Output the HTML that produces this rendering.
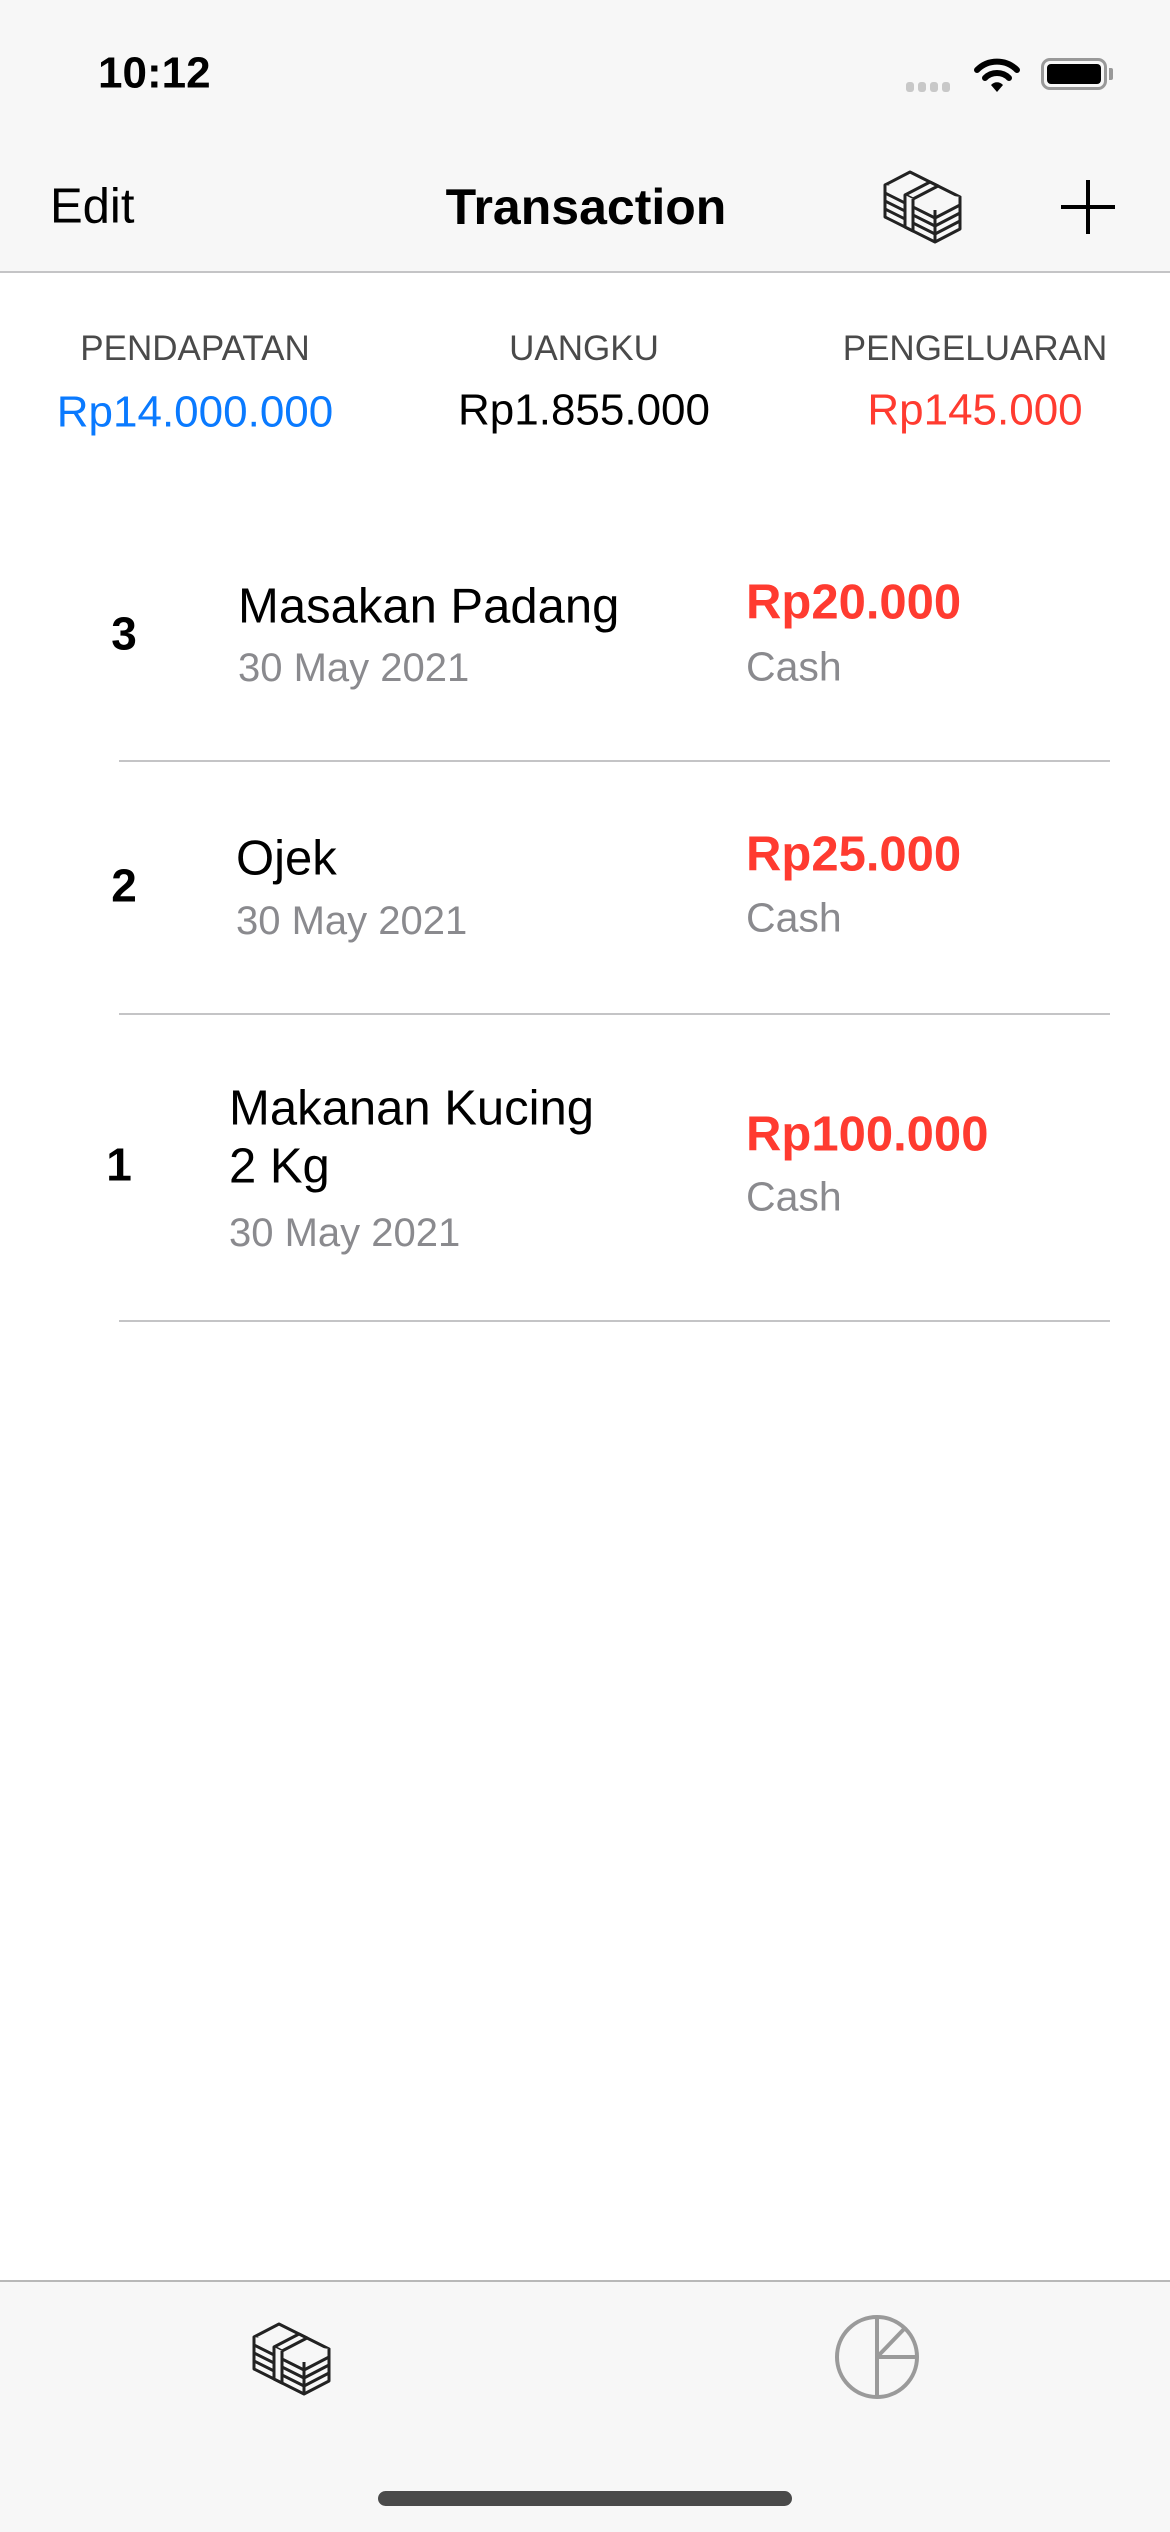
<!DOCTYPE html>
<html><head><meta charset="utf-8"><style>
*{margin:0;padding:0;box-sizing:border-box}
body{width:1170px;height:2532px;background:#fff;font-family:"Liberation Sans",sans-serif;position:relative;overflow:hidden;color:#000}
.a{position:absolute;transform:translateY(-50%);white-space:nowrap;line-height:1.2}
.c{transform:translate(-50%,-50%)}
</style></head><body>
<div style="position:absolute;left:0;top:0;width:1170px;height:273px;background:#f7f7f7;border-bottom:2px solid #c4c4c6"></div>
<div class="a" style="left:98px;top:74px;font-size:44px;font-weight:bold">10:12</div>
<div style="position:absolute;left:906px;top:82px;display:flex;gap:4px">
<div style="width:8px;height:10px;border-radius:3px;background:#c8c8c8"></div><div style="width:8px;height:10px;border-radius:3px;background:#c8c8c8"></div><div style="width:8px;height:10px;border-radius:3px;background:#c8c8c8"></div><div style="width:8px;height:10px;border-radius:3px;background:#c8c8c8"></div></div>
<svg style="position:absolute;left:974px;top:56px" width="46" height="38" viewBox="0 0 46 38"><path d="M3 14 A28 28 0 0 1 43 14" stroke="#000" stroke-width="6" fill="none" stroke-linecap="round"/><path d="M11 22 A17 17 0 0 1 35 22" stroke="#000" stroke-width="6" fill="none" stroke-linecap="round"/><path d="M17 29 L23 36 L29 29 A8 8 0 0 0 17 29Z" fill="#000"/></svg>
<div style="position:absolute;left:1041px;top:58px;width:66px;height:32px;border:3px solid #999;border-radius:9px;padding:3px"><div style="width:100%;height:100%;background:#000;border-radius:4px"></div></div>
<div style="position:absolute;left:1109px;top:68px;width:4px;height:12px;background:#999;border-radius:0 2px 2px 0"></div>

<div class="a" style="left:50px;top:207px;font-size:49px">Edit</div>
<div class="a c" style="left:586px;top:207px;font-size:50px;font-weight:bold">Transaction</div>
<svg style="position:absolute;left:883px;top:170px" width="80" height="74" viewBox="0 0 80 74" fill="#f7f7f7" stroke="#222" stroke-width="3" stroke-linejoin="round">
<path d="M2 15 L27 2 L77 27 L52 40 Z"/>
<path d="M2 15 L2 47 L52 72 L77 59 L77 27"/>
<path d="M52 40 L52 72"/>
<path d="M2 23 L52 48 L77 35 M2 31 L52 56 L77 43 M2 39 L52 64 L77 51" fill="none"/>
<path d="M22 25 L47 12 L55 16 L30 29 Z"/>
<path d="M22 25 L22 57 L30 61 L30 29" />
</svg>
<div style="position:absolute;left:1061px;top:205px;width:54px;height:4px;background:#000"></div>
<div style="position:absolute;left:1086px;top:180px;width:4px;height:54px;background:#000"></div>

<div class="a c" style="left:195px;top:349px;font-size:35px;color:#4a4a4a">PENDAPATAN</div>
<div class="a c" style="left:584px;top:349px;font-size:35px;color:#4a4a4a">UANGKU</div>
<div class="a c" style="left:975px;top:349px;font-size:35px;color:#4a4a4a">PENGELUARAN</div>
<div class="a c" style="left:195px;top:413px;font-size:44px;color:#0a7aff">Rp14.000.000</div>
<div class="a c" style="left:584px;top:411px;font-size:44px">Rp1.855.000</div>
<div class="a c" style="left:975px;top:411px;font-size:44px;color:#ff3b30">Rp145.000</div>

<div class="a c" style="left:124px;top:634px;font-size:46px;font-weight:bold">3</div>
<div class="a" style="left:238px;top:607px;font-size:49px">Masakan Padang</div>
<div class="a" style="left:238px;top:668px;font-size:40px;color:#8a8a8e">30 May 2021</div>
<div class="a" style="left:746px;top:603px;font-size:49px;font-weight:bold;color:#ff3b30">Rp20.000</div>
<div class="a" style="left:746px;top:667px;font-size:41px;color:#8a8a8e">Cash</div>
<div style="position:absolute;left:119px;top:760px;width:991px;height:2px;background:#c4c4c6"></div>

<div class="a c" style="left:124px;top:886px;font-size:46px;font-weight:bold">2</div>
<div class="a" style="left:236px;top:859px;font-size:49px">Ojek</div>
<div class="a" style="left:236px;top:921px;font-size:40px;color:#8a8a8e">30 May 2021</div>
<div class="a" style="left:746px;top:855px;font-size:49px;font-weight:bold;color:#ff3b30">Rp25.000</div>
<div class="a" style="left:746px;top:918px;font-size:41px;color:#8a8a8e">Cash</div>
<div style="position:absolute;left:119px;top:1013px;width:991px;height:2px;background:#c4c4c6"></div>

<div class="a c" style="left:119px;top:1165px;font-size:46px;font-weight:bold">1</div>
<div class="a" style="left:229px;top:1109px;font-size:49px">Makanan Kucing</div>
<div class="a" style="left:229px;top:1167px;font-size:49px">2 Kg</div>
<div class="a" style="left:229px;top:1233px;font-size:40px;color:#8a8a8e">30 May 2021</div>
<div class="a" style="left:746px;top:1135px;font-size:49px;font-weight:bold;color:#ff3b30">Rp100.000</div>
<div class="a" style="left:746px;top:1197px;font-size:41px;color:#8a8a8e">Cash</div>
<div style="position:absolute;left:119px;top:1320px;width:991px;height:2px;background:#c4c4c6"></div>

<div style="position:absolute;left:0;top:2280px;width:1170px;height:252px;background:#f7f7f7;border-top:2px solid #b8b8b8"></div>
<svg style="position:absolute;left:250px;top:2322px" width="84" height="74" viewBox="0 0 80 74" fill="#f7f7f7" stroke="#222" stroke-width="3" stroke-linejoin="round">
<path d="M2 15 L27 2 L77 27 L52 40 Z"/>
<path d="M2 15 L2 47 L52 72 L77 59 L77 27"/>
<path d="M52 40 L52 72"/>
<path d="M2 23 L52 48 L77 35 M2 31 L52 56 L77 43 M2 39 L52 64 L77 51" fill="none"/>
<path d="M22 25 L47 12 L55 16 L30 29 Z"/>
<path d="M22 25 L22 57 L30 61 L30 29" />
</svg>
<svg style="position:absolute;left:832px;top:2312px" width="90" height="90" viewBox="0 0 90 90" fill="none" stroke="#9a9a9a" stroke-width="4">
<circle cx="45" cy="45" r="40"/>
<line x1="45" y1="5" x2="45" y2="85"/>
<line x1="45" y1="45" x2="85" y2="45"/>
<line x1="47" y1="43" x2="73" y2="16"/></svg>
<div style="position:absolute;left:378px;top:2491px;width:414px;height:15px;border-radius:8px;background:#4a4a4a"></div>
</body></html>
